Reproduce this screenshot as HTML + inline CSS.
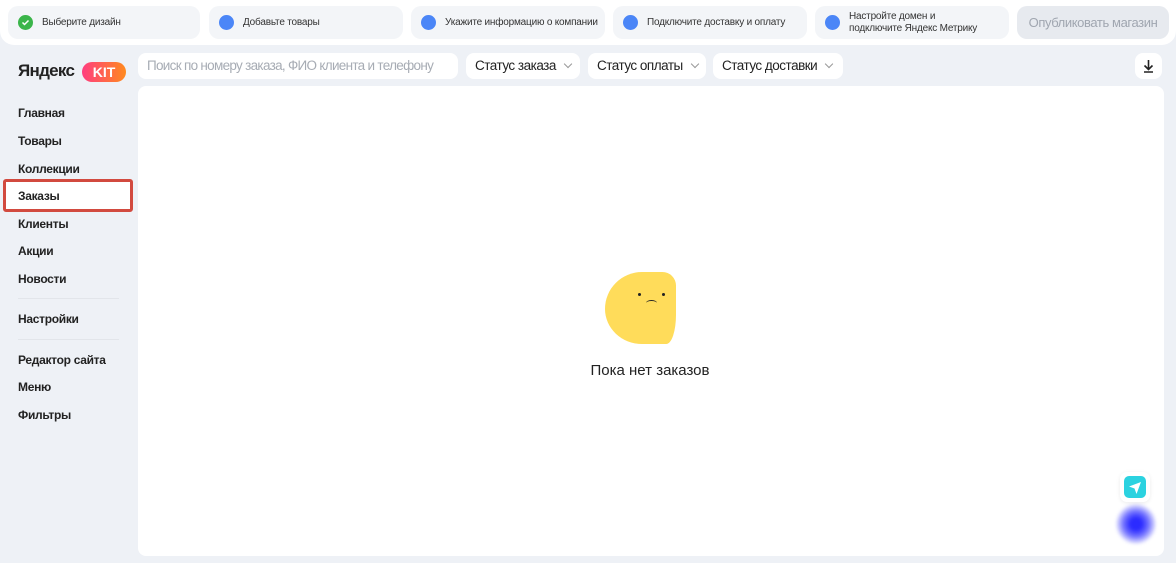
<!DOCTYPE html>
<html><head><meta charset="utf-8"><style>
*{box-sizing:border-box;margin:0;padding:0}
body{width:1176px;height:563px;background:#eef1f6;font-family:"Liberation Sans",sans-serif;color:#222;position:relative;overflow:hidden}
.top{position:absolute;left:0;top:0;width:1176px;height:45px;background:#fff;border-radius:0 0 14px 14px}
.pill{position:absolute;top:6px;height:33px;background:#f3f5f8;border-radius:10px;font-size:10px;color:#333;display:flex;align-items:center;padding-left:10px;line-height:12px;letter-spacing:-0.2px}
.dot{width:15px;height:15px;border-radius:50%;background:#4b86f7;margin-right:9px;flex:none}
.pub{position:absolute;left:1017px;top:6px;width:152px;height:33px;background:#e7eaef;border-radius:10px;font-size:13px;color:#a0a6b0;text-align:center;line-height:33px;letter-spacing:-0.4px}
.logo{position:absolute;left:18px;top:61px;font-size:17px;font-weight:bold;letter-spacing:-0.7px}
.kit{position:absolute;left:82px;top:62px;width:44px;height:20px;border-radius:10px;background:linear-gradient(90deg,#ff3d7f,#ff8a1e);color:#fff;font-weight:bold;font-size:14px;text-align:center;line-height:20px}
.nav{position:absolute;left:18px;font-size:12px;font-weight:bold;color:#222;letter-spacing:-0.3px}
.sep{position:absolute;left:18px;width:101px;height:1px;background:#e2e5ea}
.box{position:absolute;left:3px;top:179px;width:130px;height:33px;border:3px solid #d24a3f;border-radius:3px;background:#fff}
.in{position:absolute;top:53px;height:26px;background:#fff;border-radius:8px;font-size:13.5px;line-height:26px;padding-left:9px;white-space:nowrap;overflow:hidden;letter-spacing:-0.5px}
.chev{display:inline-block;width:6px;height:6px;border-right:1.2px solid #999;border-bottom:1.2px solid #999;transform:rotate(45deg);margin-left:9px;position:relative;top:-3px}
.main{position:absolute;left:138px;top:86px;width:1026px;height:470px;background:#fff;border-radius:8px}
</style></head><body>
<div class="top"></div>
<div class="pill" style="left:8px;width:192px"><span class="dot" style="background:#3bb54a;display:flex;align-items:center;justify-content:center"><svg width="9" height="9" viewBox="0 0 9 9"><path d="M1.5 4.5l2 2 4-4" stroke="#fff" stroke-width="1.5" fill="none"/></svg></span>Выберите дизайн</div>
<div class="pill" style="left:209px;width:194px"><span class="dot"></span>Добавьте товары</div>
<div class="pill" style="left:411px;width:194px"><span class="dot"></span>Укажите информацию о компании</div>
<div class="pill" style="left:613px;width:194px"><span class="dot"></span>Подключите доставку и оплату</div>
<div class="pill" style="left:815px;width:194px"><span class="dot"></span>Настройте домен и<br>подключите Яндекс Метрику</div>
<div class="pub">Опубликовать магазин</div>
<div class="logo">Яндекс</div><div class="kit">KIT</div>
<div class="box"></div>
<div class="nav" style="top:106px">Главная</div>
<div class="nav" style="top:134px">Товары</div>
<div class="nav" style="top:162px">Коллекции</div>
<div class="nav" style="top:189px">Заказы</div>
<div class="nav" style="top:217px">Клиенты</div>
<div class="nav" style="top:244px">Акции</div>
<div class="nav" style="top:272px">Новости</div>
<div class="sep" style="top:298px"></div>
<div class="nav" style="top:312px">Настройки</div>
<div class="sep" style="top:339px"></div>
<div class="nav" style="top:353px">Редактор сайта</div>
<div class="nav" style="top:380px">Меню</div>
<div class="nav" style="top:408px">Фильтры</div>
<div class="in" style="left:138px;width:320px;color:#a7acb4;letter-spacing:-0.7px">Поиск по номеру заказа, ФИО клиента и телефону</div>
<div class="in" style="left:466px;width:114px">Статус заказа<span class="chev"></span></div>
<div class="in" style="left:588px;width:118px">Статус оплаты<span class="chev"></span></div>
<div class="in" style="left:713px;width:130px">Статус доставки<span class="chev"></span></div>
<div class="in" style="left:1135px;width:27px;padding:0"><svg width="27" height="26" viewBox="0 0 27 26"><path d="M13.5 7v9M9.5 12.5l4 4 4-4M9 19h9" stroke="#222" stroke-width="1.6" fill="none"/></svg></div>
<div class="main"></div>
<div style="position:absolute;left:605px;top:272px;width:71px;height:72px;background:#ffdc5a;border-radius:38px 14px 10px 38px / 38px 14px 30px 36px"></div>
<div style="position:absolute;left:638px;top:293px;width:3px;height:3px;border-radius:50%;background:#222"></div>
<div style="position:absolute;left:662px;top:293px;width:3px;height:3px;border-radius:50%;background:#222"></div>
<div style="position:absolute;left:646px;top:300px;width:11px;height:6px;border-top:1.6px solid #222;border-radius:50% 50% 0 0"></div>
<div style="position:absolute;left:560px;top:362px;width:180px;text-align:center;font-size:15px;color:#222">Пока нет заказов</div>
<div style="position:absolute;left:1120px;top:472px;width:30px;height:30px;background:#fff;border-radius:7px;box-shadow:0 1px 4px rgba(0,0,0,0.08)"><div style="position:absolute;left:4px;top:4px;width:22px;height:22px;background:#2bd2e0;border-radius:5px"><svg width="22" height="22" viewBox="0 0 22 22"><path d="M5 10.5l12-4.5-4.5 12-2-5.5z" fill="#fff"/></svg></div></div>
<div style="position:absolute;left:1116px;top:504px;width:40px;height:40px;border-radius:50%;background:radial-gradient(circle,#2b2bff 20%,rgba(60,60,255,0.7) 45%,rgba(120,120,255,0) 75%);filter:blur(1.5px)"></div>
</body></html>
